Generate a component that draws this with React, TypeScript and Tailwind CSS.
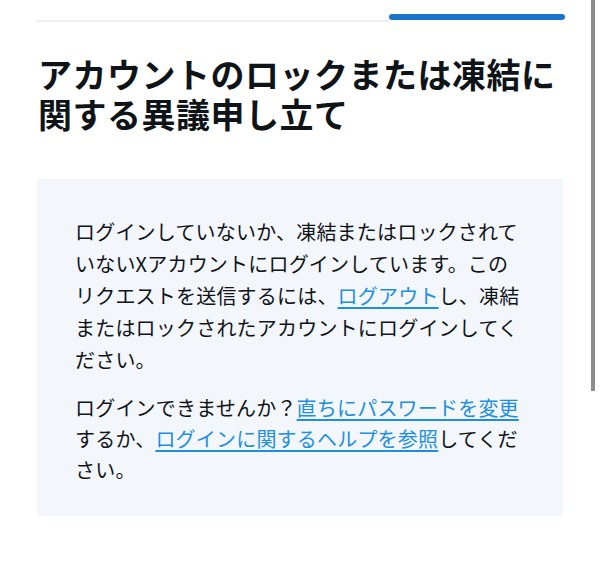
import React from 'react';

const font = { fontFamily: '"Noto Sans CJK JP", "Noto Sans", sans-serif' };

const Link: React.FC<{ children: React.ReactNode }> = ({ children }) => (
  <a href="#" className="text-[#1d8fe0] underline decoration-[1.5px] underline-offset-[3px]">
    {children}
  </a>
);

export default function App() {
  return (
    <div className="relative w-[600px] h-[572px] overflow-hidden bg-white text-[#0f1419]" style={font}>
      {/* progress */}
      <div className="flex items-end ml-[36px] mr-[35px] pt-[14px]">
        <div className="flex-1 h-[2px] bg-[#eeeeee] mb-[-2px]" />
        <div className="w-[176px] h-[6px] rounded-full bg-[#1a74c9]" />
      </div>

      {/* title */}
      <h1 className="mt-[34px] ml-[38px] mr-[30px] text-[34px] leading-[40px] font-bold tracking-[0.5px]">
        アカウントのロックまたは凍結に関する異議申し立て
      </h1>

      {/* info box */}
      <div className="mt-[45px] ml-[37px] w-[526px] bg-[#f3f6fa] pt-[37px] pb-[31px] pl-[38px]">
        <div className="w-[448px] text-[20px] leading-[32px] tracking-[0.2px]">
          <p>
            ログインしていないか、凍結またはロックされていないXアカウントにログインしています。このリクエストを送信するには、
            <Link>ログアウト</Link>
            し、凍結またはロックされたアカウントにログインしてください。
          </p>
          <p className="mt-[16px] leading-[31px]">
            ログインできませんか？<Link>直ちにパスワードを変更</Link>するか、
            <Link>ログインに関するヘルプを参照</Link>してください。
          </p>
        </div>
      </div>

      {/* scrollbar */}
      <div className="absolute right-[5px] top-0 w-[4px] h-[391px] bg-[#8c8c8c]" />
    </div>
  );
}
